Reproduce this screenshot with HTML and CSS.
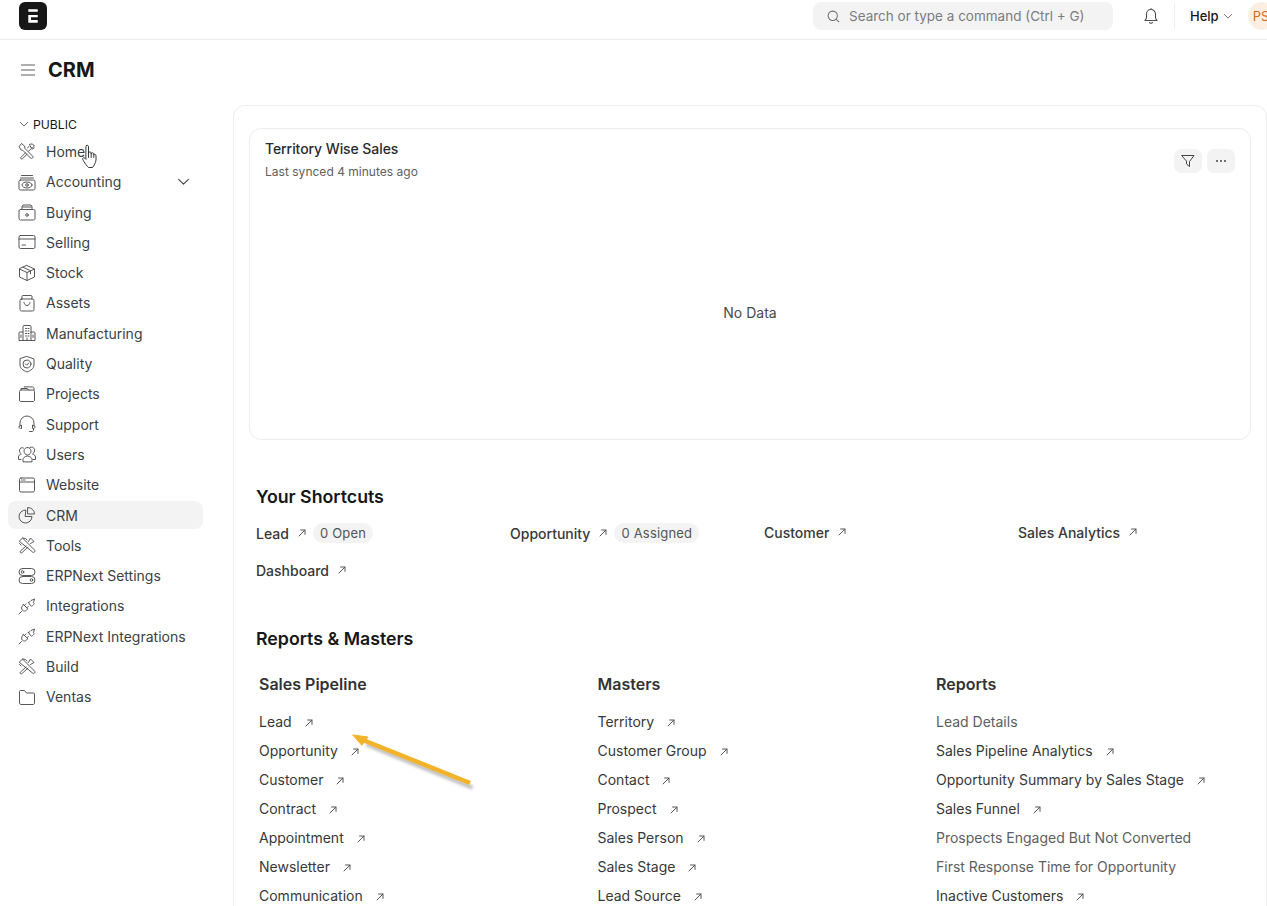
FILE: index.html
```html
<!DOCTYPE html>
<html lang="en">
<head>
<meta charset="utf-8">
<title>CRM</title>
<link rel="stylesheet" href="styles.css">
</head>
<body>
<svg class="defs" width="0" height="0" aria-hidden="true">
  <symbol id="i-arrow" viewBox="0 0 10 10"><path d="M2 8 8 2M3.600 2H8v4.400"/></symbol>
  <symbol id="i-chev" viewBox="0 0 12 12"><path d="M1.500 4 6 8.500 10.500 4"/></symbol>
  <symbol id="i-home" viewBox="0 0 18 18"><path d="M1.500 4 3.500 1.500l3 2.500.5 2.500 7.500 7.500c.6.700.6 1.400 0 2s-1.400.6-2 0L5 8.500 3 7.800zM11.500 2.500a3 3 0 0 1 4.800 1.700l-2 1.800-1.500-.4-.4-1.500zM16.200 6a3 3 0 0 1-3 .8L10.800 9M7.500 10.800 3 15.300c-.6.6-.6 1 0 1.500.6.400 1 .3 1.500-.1L9 12.300M9.500 5.800 11 4.500"/></symbol>
  <symbol id="i-accounting" viewBox="0 0 18 18"><path d="M3.500 2.500h11M2.500 5h13"/><rect x="1" y="7" width="16" height="10" rx="1.500"/><ellipse cx="9" cy="12" rx="5" ry="3"/><circle cx="9" cy="12" r="1.300"/></symbol>
  <symbol id="i-buying" viewBox="0 0 18 18"><path d="M4 6V3.500l1-1.500h8l1 1.500V6M4.500 4h9"/><rect x="1" y="6.500" width="16" height="10.500" rx="1.500"/><circle cx="9" cy="12" r="1.300"/></symbol>
  <symbol id="i-selling" viewBox="0 0 18 18"><rect x="1" y="2.500" width="16" height="13" rx="1.500"/><path d="M1 6h16M4 12h3.500"/></symbol>
  <symbol id="i-stock" viewBox="0 0 18 18"><path d="M9 1.500 16.500 5v8L9 16.500 1.500 13V5zM1.500 5 9 8.500 16.500 5M9 8.500v8M5 3.200l7.500 3.600v3"/></symbol>
  <symbol id="i-assets" viewBox="0 0 18 18"><path d="M4 5V2.500C4 2 4.300 1.500 5 1.500h8c.7 0 1 .5 1 1V5"/><rect x="2" y="5" width="14" height="12" rx="1.500"/><path d="M6 8.500c.5 2 1.500 3 3 3s2.500-1 3-3"/></symbol>
  <symbol id="i-mfg" viewBox="0 0 18 18"><path d="M5 16.500V2.500C5 2 5.300 1.500 6 1.500h6c.7 0 1 .5 1 1v14M5 8H2c-.6 0-1 .4-1 1v7.500h16V9c0-.6-.4-1-1-1h-3M7.500 4.500h1M10 4.500h1M7.500 7h1M10 7h1M7.500 9.500h1M10 9.500h1M7.500 12h1M10 12h1M3 11v2.500M15 11v2.500M9 14v2.500"/></symbol>
  <symbol id="i-quality" viewBox="0 0 18 18"><path d="M9 1.500 16 4v6c0 3.200-3 5.500-7 7-4-1.500-7-3.800-7-7V4z"/><circle cx="9" cy="9" r="4"/><path d="M7.500 9 8.700 10.200 10.800 7.800"/></symbol>
  <symbol id="i-projects" viewBox="0 0 18 18"><path d="M1.500 15V6.500C1.500 5.700 2 5 3 5h12c1 0 1.500.7 1.500 1.500V15c0 1-.6 1.500-1.500 1.500H3c-1 0-1.500-.5-1.500-1.500zM3 5V3.500h6L11 5M6 2v-.1h8.500c.8 0 1.500.7 1.500 1.500V5"/></symbol>
  <symbol id="i-support" viewBox="0 0 18 18"><path d="M2 11V8a7 7 0 0 1 14 0v3M2.500 10.500C1.600 10.500 1 11.200 1 12s.6 1.500 1.500 1.500h1v-3zM15.500 10.500c.9 0 1.500.7 1.500 1.500s-.6 1.500-1.500 1.500h-1v-3zM15.500 13.500V15c0 1-.7 1.500-1.500 1.500h-2.500"/></symbol>
  <symbol id="i-users" viewBox="0 0 18 18"><path d="M9.500 2.500C7.500 2.500 6 4 6 6s1.500 4 3.500 4S13 8 13 6s-1.500-3.500-3.500-3.500zM5 16.500v-2c0-1.500 1.500-3 4.500-3.500 3 .5 4.500 2 4.500 3.500v2zM12 2.500c2-1 4-.2 4.500 2 .3 2-.7 3.500-2 4.500 1.500.5 3 1.500 3 3v2.500H15M5.500 3c-2-1-3.500.2-4 2-.2 1.600.5 3 1.800 4C1.800 9.500.5 10.500.5 12v2.500H3"/></symbol>
  <symbol id="i-website" viewBox="0 0 18 18"><rect x="1.500" y="2" width="15" height="14" rx="1.500"/><path d="M1.500 6h15M3.500 4h.5M5 4h.5M6.500 4H7"/></symbol>
  <symbol id="i-crm" viewBox="0 0 18 18"><path d="M7.500 4A6.500 6.500 0 1 0 14 10.500H7.500z"/><path d="M10 1.500A6.500 6.500 0 0 1 16.500 8H10z"/></symbol>
  <symbol id="i-tools" viewBox="0 0 18 18"><path d="M1.500 5 4.500 2l12 12c.6.700.6 1.400 0 2s-1.400.6-2 0zM3 9 1.500 7.500M4.500 2l3 .5L9 4M10.500 5.500l2-3.500 3.500 3.500-3.500 2M8 10l-5.500 5c-.6.700-.6 1.200 0 1.600.6.400 1.200.3 1.700-.2L10 11"/></symbol>
  <symbol id="i-settings" viewBox="0 0 18 18"><rect x="1" y="1.500" width="16" height="7" rx="3.500"/><rect x="1" y="9.500" width="16" height="7" rx="3.500"/><circle cx="4.500" cy="5" r="1.300"/><circle cx="13.500" cy="13" r="1.300"/></symbol>
  <symbol id="i-plug" viewBox="0 0 18 18"><path d="M5.500 7.500 9.800 11.800l-1.300 1.300c-1.200 1.200-3 1.200-4.100 0s-1.200-2.900 0-4.100zM1 17l2.600-2.600M6.400 8.400l1.500-1.500M8.800 10.800l1.500-1.500M10.500 5.500 12.500 8.500c.5.700 1.300.7 2 .2l1-1c.6-.6.7-1.500 0-2L16.500 2l-3.500 1.500-1 1c-.7.500-.9.800-1.500 1z"/></symbol>
  <symbol id="i-folder" viewBox="0 0 18 18"><path d="M1.500 14.500v-11c0-.7.5-1 1-1h4l2 2.500h7c.6 0 1 .5 1 1V15c0 .8-.6 1.500-1.500 1.500H3c-1 0-1.500-.9-1.500-2z"/></symbol>
</svg>

<header class="topbar">
  <div class="logo"><svg class="logo-mark" viewBox="0 0 14 14"><path d="M2.300.3h9.400v2.400H2.300zM2.300 6h9.400v2.300H5V11h6.700v2.700H2.300z"/></svg></div>
  <div class="search">
    <svg class="search-ic" viewBox="0 0 14 14"><circle cx="6.200" cy="6.200" r="5"/><path d="m10 10 2.800 2.800"/></svg>
    <span>Search or type a command (Ctrl + G)</span>
  </div>
  <svg class="bell" viewBox="0 0 16 18"><path d="M2 13.500c1-1 1.500-2 1.500-3.500V7a4.500 4.500 0 0 1 9 0v3c0 1.500.5 2.500 1.500 3.500zM6.500 15.500c.5 1 2.500 1 3 0M8 2.500V1.500"/></svg>
  <div class="vr"></div>
  <div class="help">Help<svg class="chev-s"><use href="#i-chev"/></svg></div>
  <div class="avatar">PS</div>
</header>

<div class="title-row">
  <svg class="burger" viewBox="0 0 14 12"><path d="M0 1h14M0 6h14M0 11h14"/></svg>
  <h1>CRM</h1>
</div>

<div class="layout">
  <aside class="sidebar">
    <div class="side-head"><svg class="chev-xs"><use href="#i-chev"/></svg>PUBLIC</div>
    <nav class="side-list">
      <a class="side-item"><svg class="ic"><use href="#i-home"/></svg>Home</a>
      <a class="side-item"><svg class="ic"><use href="#i-accounting"/></svg>Accounting<svg class="chev-m"><use href="#i-chev"/></svg></a>
      <a class="side-item"><svg class="ic"><use href="#i-buying"/></svg>Buying</a>
      <a class="side-item"><svg class="ic"><use href="#i-selling"/></svg>Selling</a>
      <a class="side-item"><svg class="ic"><use href="#i-stock"/></svg>Stock</a>
      <a class="side-item"><svg class="ic"><use href="#i-assets"/></svg>Assets</a>
      <a class="side-item"><svg class="ic"><use href="#i-mfg"/></svg>Manufacturing</a>
      <a class="side-item"><svg class="ic"><use href="#i-quality"/></svg>Quality</a>
      <a class="side-item"><svg class="ic"><use href="#i-projects"/></svg>Projects</a>
      <a class="side-item"><svg class="ic"><use href="#i-support"/></svg>Support</a>
      <a class="side-item"><svg class="ic"><use href="#i-users"/></svg>Users</a>
      <a class="side-item"><svg class="ic"><use href="#i-website"/></svg>Website</a>
      <a class="side-item active"><svg class="ic"><use href="#i-crm"/></svg>CRM</a>
      <a class="side-item"><svg class="ic"><use href="#i-tools"/></svg>Tools</a>
      <a class="side-item"><svg class="ic"><use href="#i-settings"/></svg>ERPNext Settings</a>
      <a class="side-item"><svg class="ic"><use href="#i-plug"/></svg>Integrations</a>
      <a class="side-item"><svg class="ic"><use href="#i-plug"/></svg>ERPNext Integrations</a>
      <a class="side-item"><svg class="ic"><use href="#i-tools"/></svg>Build</a>
      <a class="side-item"><svg class="ic"><use href="#i-folder"/></svg>Ventas</a>
    </nav>
  </aside>

  <main class="panel">
    <section class="chart">
      <div class="chart-head">
        <div>
          <div class="chart-title">Territory Wise Sales</div>
          <div class="chart-sub">Last synced 4 minutes ago</div>
        </div>
        <div class="chart-actions">
          <button class="tool-btn"><svg class="filter" viewBox="0 0 14 14"><path d="M1 1.500h12L8.500 7.500v5l-3-2.500V7.500z"/></svg></button>
          <button class="tool-btn"><svg class="dots" viewBox="0 0 12 4"><circle cx="2" cy="2" r="1"/><circle cx="6" cy="2" r="1"/><circle cx="10" cy="2" r="1"/></svg></button>
        </div>
      </div>
      <div class="chart-empty">No Data</div>
    </section>

    <h2 class="sec-title shortcuts-title">Your Shortcuts</h2>
    <div class="shortcuts">
      <div class="shortcut has-pill"><span>Lead</span><svg class="arrow"><use href="#i-arrow"/></svg><span class="pill">0 Open</span></div>
      <div class="shortcut has-pill"><span>Opportunity</span><svg class="arrow"><use href="#i-arrow"/></svg><span class="pill">0 Assigned</span></div>
      <div class="shortcut"><span>Customer</span><svg class="arrow"><use href="#i-arrow"/></svg></div>
      <div class="shortcut"><span>Sales Analytics</span><svg class="arrow"><use href="#i-arrow"/></svg></div>
      <div class="shortcut"><span>Dashboard</span><svg class="arrow"><use href="#i-arrow"/></svg></div>
    </div>

    <h2 class="sec-title reports-title">Reports &amp; Masters</h2>
    <div class="reports">
      <div class="col">
        <h3>Sales Pipeline</h3>
        <a class="lnk">Lead<svg class="arrow"><use href="#i-arrow"/></svg></a>
        <a class="lnk">Opportunity<svg class="arrow"><use href="#i-arrow"/></svg></a>
        <a class="lnk">Customer<svg class="arrow"><use href="#i-arrow"/></svg></a>
        <a class="lnk">Contract<svg class="arrow"><use href="#i-arrow"/></svg></a>
        <a class="lnk">Appointment<svg class="arrow"><use href="#i-arrow"/></svg></a>
        <a class="lnk">Newsletter<svg class="arrow"><use href="#i-arrow"/></svg></a>
        <a class="lnk">Communication<svg class="arrow"><use href="#i-arrow"/></svg></a>
      </div>
      <div class="col">
        <h3>Masters</h3>
        <a class="lnk">Territory<svg class="arrow"><use href="#i-arrow"/></svg></a>
        <a class="lnk">Customer Group<svg class="arrow"><use href="#i-arrow"/></svg></a>
        <a class="lnk">Contact<svg class="arrow"><use href="#i-arrow"/></svg></a>
        <a class="lnk">Prospect<svg class="arrow"><use href="#i-arrow"/></svg></a>
        <a class="lnk">Sales Person<svg class="arrow"><use href="#i-arrow"/></svg></a>
        <a class="lnk">Sales Stage<svg class="arrow"><use href="#i-arrow"/></svg></a>
        <a class="lnk">Lead Source<svg class="arrow"><use href="#i-arrow"/></svg></a>
      </div>
      <div class="col">
        <h3>Reports</h3>
        <a class="lnk muted">Lead Details</a>
        <a class="lnk">Sales Pipeline Analytics<svg class="arrow"><use href="#i-arrow"/></svg></a>
        <a class="lnk">Opportunity Summary by Sales Stage<svg class="arrow"><use href="#i-arrow"/></svg></a>
        <a class="lnk">Sales Funnel<svg class="arrow"><use href="#i-arrow"/></svg></a>
        <a class="lnk muted">Prospects Engaged But Not Converted</a>
        <a class="lnk muted">First Response Time for Opportunity</a>
        <a class="lnk">Inactive Customers<svg class="arrow"><use href="#i-arrow"/></svg></a>
      </div>
    </div>
  </main>
</div>

<svg class="callout" viewBox="0 0 130 60" aria-hidden="true">
  <path class="callout-shadow" d="M18 13 121 55"/>
  <path class="callout-line" d="M13 8 120 51"/>
  <path class="callout-head" d="M3 3 18 5 12 13z"/>
</svg>
<svg class="cursor" viewBox="0 0 17 25" aria-hidden="true">
  <path d="M5 1.500c.9-.6 2-.1 2 1v7l.3-1c.6-.9 2-.7 2.200.3l.2 1 .3-.6c.6-.8 2-.5 2.200.5l.1.9c.5-.6 1.900-.3 2.100.8.300 2.500.300 5-.5 7.100-.6 1.600-1.600 3.500-2.900 5H7c-1.500-1.300-3.500-4-4.800-6.300-.8-1.400-1.300-2.400-.9-3 .5-.8 1.600-.5 2.200.2l.9 1V2.500c0-.4.300-.8.600-1z"/>
  <path d="M7 9.500v4M9.700 9.500v4M12.300 10.500v3"/>
</svg>
</body>
</html>
```
FILE: styles.css
```css
* { box-sizing: border-box; }
html, body { margin: 0; height: 906px; overflow: hidden; background: #fff; }
body { font-family: Inter, "Liberation Sans", sans-serif; font-size: 14px; color: #383838; position: relative; }
.defs { position: absolute; }
svg { fill: none; stroke: currentColor; stroke-linecap: round; stroke-linejoin: round; flex: none; }

.topbar { height: 40px; border-bottom: 1px solid #ededed; display: flex; align-items: flex-start; padding: 2px 0 0 19px; }
.logo { width: 28px; height: 28px; border-radius: 6px; background: #171717; display: flex; align-items: center; justify-content: center; }
.logo-mark { width: 14px; height: 14px; fill: #fff; stroke: none; }
.search { margin-left: 766px; width: 300px; height: 28px; border-radius: 8px; background: #f3f3f3; display: flex; align-items: center; gap: 9px; padding-left: 14px; font-size: 13.500px; color: #7c7c7c; }
.search-ic { width: 13px; height: 13px; color: #707070; stroke-width: 1.100; }
.bell { width: 16px; height: 18px; margin: 5px 0 0 30px; color: #4c4c4c; stroke-width: 1.100; }
.vr { width: 1px; height: 24px; background: #ededed; margin: 2px 0 0 15px; }
.help { display: flex; align-items: center; gap: 4px; margin: 0 0 0 15px; height: 28px; font-size: 13px; color: #171717; font-weight: 500; }
.chev-s { width: 10px; height: 10px; color: #666; stroke-width: 1.100; }
.avatar { width: 28px; height: 28px; border-radius: 50%; background: #fdeee2; color: #d96a16; font-size: 13px; display: flex; align-items: center; padding-left: 5px; margin: 0 -10px 0 15px; flex: none; }

.title-row { height: 65px; display: flex; align-items: center; padding: 0 0 6px 21px; gap: 13px; }
.burger { width: 14px; height: 12px; color: #5f5f5f; stroke-width: 1.100; }
h1 { margin: 0; font-size: 20px; font-weight: 700; color: #171717; line-height: 1; }

.layout { display: flex; align-items: flex-start; height: 801px; overflow: hidden; }
.sidebar { width: 233px; flex: none; padding: 0 30px 0 8px; }
.side-head { height: 28px; display: flex; align-items: center; gap: 4px; padding: 10px 0 0 11px; font-size: 12.200px; color: #171717; }
.chev-xs { width: 10px; height: 10px; color: #555; stroke-width: 1.100; }
.side-list { display: flex; flex-direction: column; padding-top: 4.450px; gap: 2.300px; }
.side-item { height: 28px; display: flex; align-items: center; border-radius: 8px; padding: 0 0 0 10px; gap: 10px; color: #3b3f46; }
.side-item.active { background: #f3f3f3; }
.ic { width: 18px; height: 18px; color: #4f4f4f; stroke-width: .95; }
.chev-m { width: 13px; height: 13px; margin-left: auto; margin-right: 13px; color: #444; stroke-width: 1; }

.panel { flex: 1; min-width: 0; height: 830px; border: 1px solid #ededed; border-radius: 12px; padding: 22px 15px 0 15px; }
.chart { height: 312px; border: 1px solid #ededed; border-radius: 12px; padding: 0 15px; display: flex; flex-direction: column; }
.chart-head { display: flex; justify-content: space-between; padding-top: 11px; }
.chart-title { font-size: 14px; font-weight: 500; color: #2b2b2b; line-height: 17px; letter-spacing: -.08px; }
.chart-sub { font-size: 12px; color: #5e5e5e; line-height: 15px; margin-top: 7px; letter-spacing: .02px; }
.chart-actions { display: flex; gap: 5px; padding-top: 9px; }
.tool-btn { width: 28px; height: 24px; border: 0; padding: 0; border-radius: 7px; background: #f3f3f3; display: flex; align-items: center; justify-content: center; color: #444; }
.filter { width: 14px; height: 14px; stroke-width: 1; }
.dots { width: 12px; height: 4px; fill: #444; stroke: none; }
.chart-empty { text-align: center; margin-top: 125px; font-size: 14px; color: #4a4a4a; }

.sec-title { margin: 0; font-size: 17.750px; font-weight: 600; color: #171717; line-height: 22px; padding-left: 7px; }
.shortcuts-title { margin-top: 46px; }
.reports-title { margin-top: 31px; }
.shortcuts { display: grid; grid-template-columns: repeat(4, 254px); grid-auto-rows: 38px; margin: 13px 0 0 7px; }
.shortcut { display: flex; align-items: center; height: 22px; color: #383838; font-weight: 450; }
.shortcut.has-pill { height: 24px; }
.arrow { width: 10px; height: 10px; color: #555; stroke-width: 1; margin-left: 8px; }
.pill { margin-left: 6px; height: 20px; border-radius: 10px; background: #f3f3f3; padding: 0 7px; font-size: 13px; font-weight: 400; color: #555; display: flex; align-items: center; letter-spacing: .2px; }

.reports { display: grid; grid-template-columns: repeat(3, 338.500px); margin: 24px 0 0 10px; }
h3 { margin: 0 0 13px; font-size: 16px; font-weight: 600; line-height: 20px; color: #333; }
.col { display: flex; flex-direction: column; }
.lnk { height: 29px; display: flex; align-items: center; color: #383838; }
.lnk .arrow { margin-left: 12px; margin-top: 2px; }
.lnk.muted { color: #5e5e5e; }

.callout { position: absolute; left: 350px; top: 732px; width: 130px; height: 60px; }
.callout-line { stroke: #f2b32a; stroke-width: 4.500; stroke-linecap: butt; }
.callout-shadow { stroke: rgba(60,60,60,.35); stroke-width: 4; filter: blur(1.500px); }
.callout-head { fill: #f2b32a; stroke: #f2b32a; stroke-width: 1; }
.cursor { position: absolute; left: 81px; top: 144px; width: 18px; height: 25px; fill: #fff; stroke: #222; stroke-width: .9; }
```
